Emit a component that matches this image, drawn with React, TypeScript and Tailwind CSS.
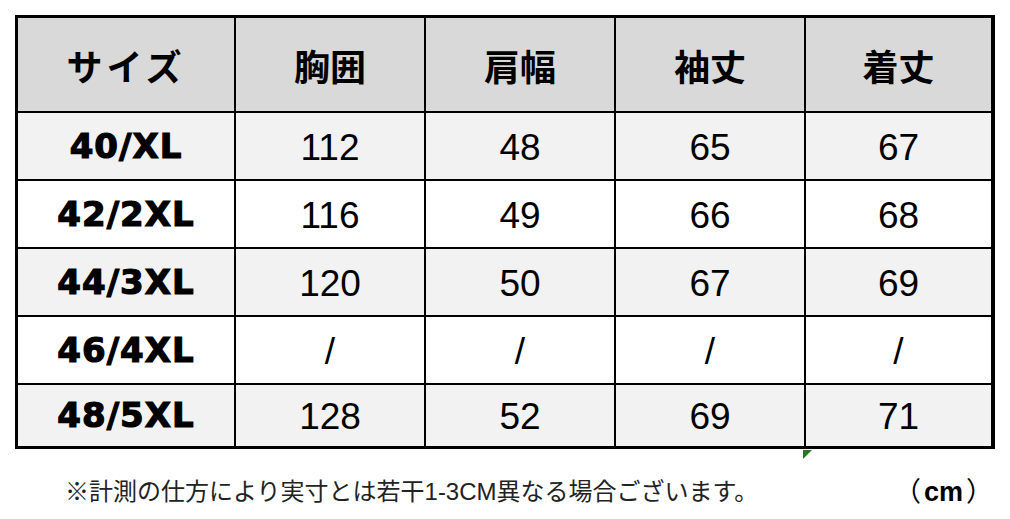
const headers = ["サイズ", "胸囲", "肩幅", "袖丈", "着丈"];

const rows = [
  ["40/XL", "112", "48", "65", "67"],
  ["42/2XL", "116", "49", "66", "68"],
  ["44/3XL", "120", "50", "67", "69"],
  ["46/4XL", "/", "/", "/", "/"],
  ["48/5XL", "128", "52", "69", "71"],
];

export default function App() {
  return (
    <main className="bg-white w-[1010px] h-[519px] overflow-hidden pt-[15px] pl-[15px] text-black">

      {/* TABLE */}

      <div className="relative w-fit border-l-[3px] border-t-[3px] border-r-[4px] border-b-[3px] border-black">
        <div className="grid grid-cols-[216px_188px_188px_188px_185px] grid-rows-[93px_66px_66px_66px_66px_61px] gap-[2px] bg-black">

          {headers.map((h, i) => (
            <div
              key={h}
              className={`bg-[#d9d9d9] flex items-center justify-center text-[36px] font-bold font-['Noto_Sans_CJK_JP',sans-serif] ${i === 0 ? "tracking-[4px]" : ""}`}
            >
              {h}
            </div>
          ))}

          {rows.map((r, ri) =>
            r.map((c, ci) => (
              <div
                key={ri + "-" + ci}
                className={`flex items-center justify-center ${ri % 2 === 0 ? "bg-[#f2f2f2]" : "bg-white"} ${
                  ci === 0
                    ? "text-[34px] font-bold tracking-[1px] [-webkit-text-stroke:1.2px_black] font-['DejaVu_Sans',sans-serif]"
                    : "text-[37px] pt-[3px] font-['Liberation_Sans',Arial,sans-serif]"
                }`}
              >
                {c}
              </div>
            ))
          )}
        </div>

        {/* green cell marker */}
        <svg className="absolute left-[785px] top-[432px]" width="9" height="9" viewBox="0 0 10 10">
          <polygon points="0,0 10,0 0,10" fill="#1e7b1e" />
        </svg>
      </div>

      {/* NOTE */}

      <div className="flex items-center justify-between w-[978px] mt-[27px] pl-[50px]">
        <p className="text-[24px] text-[#222] font-['Noto_Sans_CJK_JP',sans-serif] leading-none">
          ※計測の仕方により実寸とは若干<span className="font-['Liberation_Sans',sans-serif]">1-3CM</span>異なる場合ございます。
        </p>
        <p className="text-[27px] leading-none font-['Noto_Sans_CJK_JP',sans-serif]">
          （<span className="font-bold px-[3px] font-['Liberation_Sans',sans-serif]">cm</span>）
        </p>
      </div>

    </main>
  );
}
